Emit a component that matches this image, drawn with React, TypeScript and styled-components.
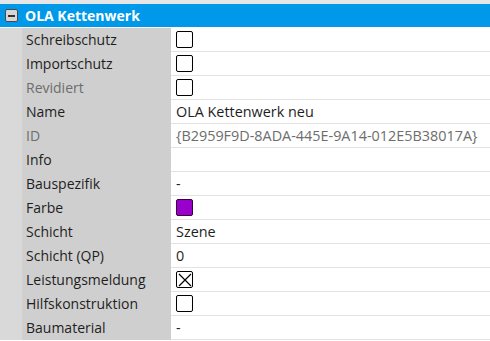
import React from 'react';
import styled, { createGlobalStyle } from 'styled-components';

type Row = {
  label: string;
  kind: 'check' | 'cross' | 'text' | 'color' | 'empty';
  value?: string;
  dim?: boolean;
  dimValue?: boolean;
};

const rows: Row[] = [
  { label: 'Schreibschutz', kind: 'check' },
  { label: 'Importschutz', kind: 'check' },
  { label: 'Revidiert', kind: 'check', dim: true },
  { label: 'Name', kind: 'text', value: 'OLA Kettenwerk neu' },
  { label: 'ID', kind: 'text', value: '{B2959F9D-8ADA-445E-9A14-012E5B38017A}', dim: true, dimValue: true },
  { label: 'Info', kind: 'empty' },
  { label: 'Bauspezifik', kind: 'text', value: '-' },
  { label: 'Farbe', kind: 'color' },
  { label: 'Schicht', kind: 'text', value: 'Szene' },
  { label: 'Schicht (QP)', kind: 'text', value: '0' },
  { label: 'Leistungsmeldung', kind: 'cross' },
  { label: 'Hilfskonstruktion', kind: 'check' },
  { label: 'Baumaterial', kind: 'text', value: '-' },
];

const GlobalStyle = createGlobalStyle`
  html, body {
    margin: 0;
    padding: 0;
    background: #ffffff;
    font-family: "Open Sans", "Noto Sans", "Liberation Sans", sans-serif;
  }
`;

const App = () => {
  return (
    <Grid>
      <GlobalStyle />
      <TopStrip />
      <Header>
        <Toggle>
          <span />
        </Toggle>
        <Title>OLA Kettenwerk</Title>
      </Header>
      {rows.map((row) => (
        <PropRow key={row.label}>
          <Indent />
          <Label $dim={row.dim}>{row.label}</Label>
          <Value $dim={row.dimValue}>
            {row.kind === 'check' && <Check />}
            {row.kind === 'cross' && (
              <Check>
                <svg width="14" height="14" viewBox="0 0 14 14">
                  <path d="M1 1 L13 13 M13 1 L1 13" stroke="#000" strokeWidth="1.2" />
                </svg>
              </Check>
            )}
            {row.kind === 'color' && <Swatch />}
            {row.kind === 'text' && row.value}
          </Value>
        </PropRow>
      ))}
    </Grid>
  );
};

const Grid = styled.div`
  width: 490px;
  height: 341px;
  overflow: hidden;
  background: #ffffff;
`;

const TopStrip = styled.div`
  height: 4px;
  background: #e6e6e6;
`;

const Header = styled.div`
  height: 23px;
  background: #0099e9;
  display: flex;
  align-items: center;
  border-bottom: 1px solid #ffffff;
`;

const Toggle = styled.div`
  width: 11px;
  height: 11px;
  margin-left: 5px;
  margin-right: 7px;
  border: 1px solid #4a4a4a;
  border-radius: 2px;
  background: #d6d6d6;
  display: flex;
  align-items: center;
  justify-content: center;

  span {
    width: 7px;
    height: 2px;
    background: #333333;
  }
`;

const Title = styled.div`
  color: #ffffff;
  font-weight: 700;
  font-size: 14px;
  line-height: 23px;
`;

const PropRow = styled.div`
  display: flex;
  height: 24px;
`;

const Indent = styled.div`
  width: 22px;
  flex: none;
  background: #d9d9d9;
`;

const Label = styled.div<{ $dim?: boolean }>`
  width: 145px;
  flex: none;
  padding-left: 4px;
  background: #cfcfcf;
  color: ${(p) => (p.$dim ? '#6d6d6d' : '#1e1e1e')};
  font-size: 14px;
  line-height: 24px;
  white-space: nowrap;
`;

const Value = styled.div<{ $dim?: boolean }>`
  flex: 1;
  display: flex;
  align-items: center;
  padding-left: 5px;
  border-bottom: 1px solid #e3e3e3;
  color: ${(p) => (p.$dim ? '#6d6d6d' : '#1e1e1e')};
  font-size: 14.4px;
  white-space: nowrap;
  overflow: hidden;
`;

const Check = styled.div`
  width: 15px;
  height: 15px;
  border: 1px solid #000000;
  border-radius: 2px;
  background: #ffffff;
  display: flex;
  align-items: center;
  justify-content: center;
`;

const Swatch = styled.div`
  width: 15px;
  height: 15px;
  border: 1px solid #3a003a;
  border-radius: 2px;
  background: #9900cc;
`;

export default App;
